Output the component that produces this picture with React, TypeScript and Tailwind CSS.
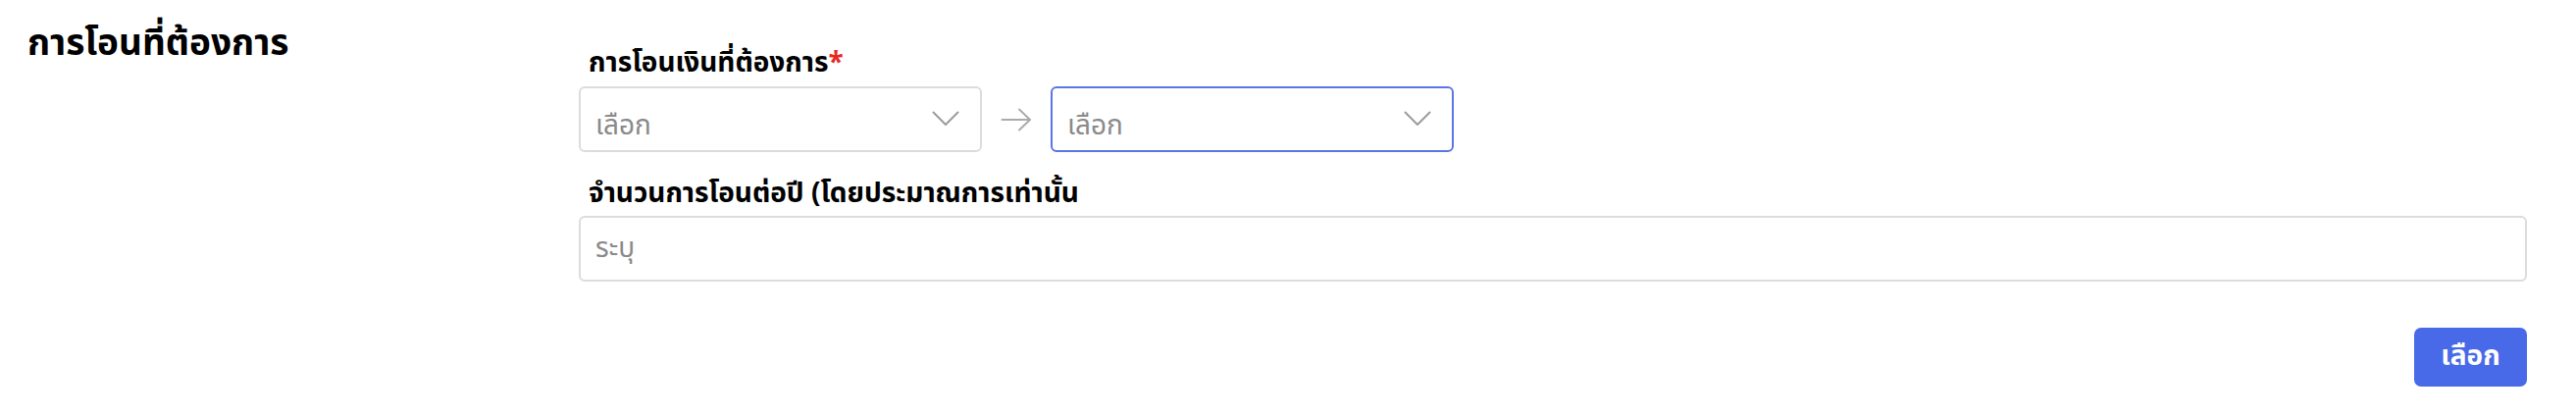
const font = { fontFamily: '"Noto Sans Thai", "Noto Sans", "Liberation Sans", sans-serif' }

function Chevron() {
  return (
    <svg width="28" height="16" viewBox="0 0 28 16" fill="none" stroke="#9c9c9c" strokeWidth="2" strokeLinecap="round" strokeLinejoin="round">
      <polyline points="1.5,1.5 14,14 26.5,1.5" />
    </svg>
  )
}

function SelectBox({ active }: { active?: boolean }) {
  return (
    <div
      className={`flex h-[67px] w-[411px] items-center justify-between rounded-[6px] bg-white pl-[15px] pr-[21px] ${
        active ? "border-2 border-[#5b76e0]" : "border-2 border-[#dcdcdc]"
      }`}
    >
      <span className="mt-[15px] text-[28px] text-[#8a8a8a]">เลือก</span>
      <div className="-mt-[2px]">
        <Chevron />
      </div>
    </div>
  )
}

export default function App() {
  return (
    <div className="flex min-h-[424px] w-full bg-white text-black" style={font}>
      {/* Left heading */}
      <div className="w-[590px] shrink-0 pl-[28px] pt-[20px]">
        <h2 className="text-[37px] font-bold leading-[50px]">การโอนที่ต้องการ</h2>
      </div>

      {/* Form */}
      <div className="flex flex-1 flex-col pr-[50px] pt-[44px]">
        <label className="pl-[10px] text-[28px] font-bold leading-[42px]">
          การโอนเงินที่ต้องการ<span className="text-[#e8281e]">*</span>
        </label>
        <div className="mt-[2px] flex items-center">
          <SelectBox />
          <svg className="mx-[19px]" width="32" height="24" viewBox="0 0 32 24" fill="none" stroke="#ababab" strokeWidth="2" strokeLinecap="round" strokeLinejoin="round">
            <line x1="1.5" y1="12" x2="30" y2="12" />
            <polyline points="19,1.5 30,12 19,22.5" />
          </svg>
          <SelectBox active />
        </div>

        <label className="mt-[22px] pl-[10px] text-[28px] font-bold leading-[42px]">
          จำนวนการโอนต่อปี (โดยประมาณการเท่านั้น
        </label>
        <div className="mt-[1px] flex h-[67px] items-center rounded-[6px] border-2 border-[#dcdcdc] bg-white pl-[15px]">
          <span className="text-[28px] text-[#8a8a8a]">ระบุ</span>
        </div>

        <div className="mt-[47px] flex justify-end">
          <button className="flex h-[60px] w-[115px] items-center justify-center rounded-[7px] bg-[#4869e8] text-[28px] font-bold text-white">
            เลือก
          </button>
        </div>
      </div>
    </div>
  )
}
